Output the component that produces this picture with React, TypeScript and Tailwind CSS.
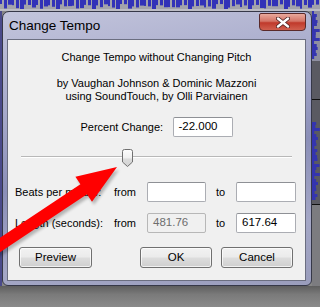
import React from 'react';

const font = { fontFamily: '"Liberation Sans", Arial, sans-serif' };

// deterministic waveform bars for the background track
const topBars = Array.from({ length: 80 }, (_, i) => {
  const v = Math.abs(Math.sin(i * 1.7) * 0.6 + Math.sin(i * 0.37) * 0.4);
  return { x: i * 4, w: 2 + (i % 3), h: 4 + v * 6 };
});
const sideBars = Array.from({ length: 70 }, (_, i) => {
  const v = Math.abs(Math.sin(i * 2.3) * 0.5 + Math.sin(i * 0.21) * 0.5);
  return { y: i * 3, w: 2 + v * 6 };
});

const TextBox: React.FC<{ value?: string; disabled?: boolean; className?: string }> = ({ value, disabled, className }) => (
  <div
    className={`h-[20px] flex items-center px-[5px] border rounded-[2px] text-[11.5px] ${
      disabled
        ? 'bg-[#f0f0f0] border-[#b7b7b7] text-[#6d6d6d]'
        : 'bg-white border-[#abadb3] border-t-[#8e9095] text-black'
    } ${className ?? ''}`}
  >
    {value}
  </div>
);

const Button: React.FC<{ label: string; className?: string }> = ({ label, className }) => (
  <button
    className={`h-[21px] rounded-[3px] border border-[#707070] bg-[linear-gradient(to_bottom,#f2f2f2_0%,#ebebeb_48%,#dddddd_52%,#cfcfcf_100%)] text-[11.5px] text-black shadow-[inset_0_0_0_1px_rgba(255,255,255,0.7)] ${className ?? ''}`}
  >
    {label}
  </button>
);

export default function App() {
  return (
    <div className="relative w-[320px] h-[307px] overflow-hidden bg-[#858585] flex flex-col" style={font}>
      {/* waveform strip above the dialog */}
      <div className="h-[11px] bg-[#a3a3ab] relative">
        <svg width="320" height="11" className="block">
          {topBars.map((b, i) => (
            <rect key={i} x={b.x} y={0} width={b.w} height={b.h} fill="#3232b8" />
          ))}
          <rect x="0" y="9" width="320" height="2" fill="#bcbcc4" />
        </svg>
      </div>

      <div className="flex h-[275px]">
        <div className="w-[2px] bg-[#4a4a8a]" />

        {/* dialog window */}
        <div className="w-[310px] flex flex-col rounded-t-[7px] rounded-b-[6px] border border-[#363848] bg-[linear-gradient(170deg,#c3c5dc_0%,#a7aacb_30%,#8b8fb8_55%,#a4a7c6_80%,#9a9dbc_100%)] pl-[4px] pr-[5px] pb-[4px]">
          <div className="h-[27px] flex items-start justify-between">
            <span className="mt-[7px] ml-[2px] text-[13.5px] leading-[14px] text-black">Change Tempo</span>
            <div className="mt-[1px] w-[47px] h-[18px] rounded-b-[4px] rounded-t-[2px] border border-[#5a2a2a] bg-[linear-gradient(to_bottom,#e9a99c_0%,#d47466_45%,#c0392b_55%,#d0604f_100%)] flex items-center justify-center">
              <svg width="14" height="11" viewBox="0 0 14 11">
                <path d="M2 1.5 L12 9.5 M12 1.5 L2 9.5" stroke="#4a2020" strokeWidth="4" strokeLinecap="round" />
                <path d="M2 1.5 L12 9.5 M12 1.5 L2 9.5" stroke="#ffffff" strokeWidth="2.4" strokeLinecap="round" />
              </svg>
            </div>
          </div>

          {/* client area */}
          <div className="flex-1 flex flex-col border border-[#6b6e80] bg-[#f0f0f0] text-[11px] text-black whitespace-nowrap">
            <div className="mt-[11px] text-center leading-[13px]">Change Tempo without Changing Pitch</div>
            <div className="mt-[13px] text-center leading-[13px]">
              <div>by Vaughan Johnson &amp; Dominic Mazzoni</div>
              <div>using SoundTouch, by Olli Parviainen</div>
            </div>

            <div className="mt-[14px] flex justify-center items-center gap-[10px]">
              <span className="w-[82px] text-right">Percent Change:</span>
              <TextBox value="-22.000" className="w-[60px]" />
            </div>

            {/* slider */}
            <div className="mt-[12px] h-[18px] px-[13px] relative">
              <div className="mt-[7px] h-[2px] bg-[#b8b8b8] border-b border-white" />
              <svg width="11" height="18" viewBox="0 0 11 18" className="absolute top-0 left-[114px]">
                <defs>
                  <linearGradient id="thumb" x1="0" y1="0" x2="0" y2="1">
                    <stop offset="0" stopColor="#fdfdfd" />
                    <stop offset="0.5" stopColor="#f0f0f0" />
                    <stop offset="0.55" stopColor="#dcdcdc" />
                    <stop offset="1" stopColor="#d2d2d2" />
                  </linearGradient>
                </defs>
                <path d="M0.5 2.5 Q0.5 0.5 2.5 0.5 H8.5 Q10.5 0.5 10.5 2.5 V13 L5.5 17.5 L0.5 13 Z" fill="url(#thumb)" stroke="#707070" />
              </svg>
            </div>

            <div className="mt-[15px] flex items-center pl-[7px]">
              <span className="w-[99px]">Beats per minute:</span>
              <span className="w-[33px]">from</span>
              <TextBox className="w-[59px]" />
              <span className="w-[20px] ml-[10px]">to</span>
              <TextBox className="w-[60px]" />
            </div>

            <div className="mt-[11px] flex items-center pl-[7px]">
              <span className="w-[99px]">Length (seconds):</span>
              <span className="w-[33px]">from</span>
              <TextBox value="481.76" disabled className="w-[59px]" />
              <span className="w-[20px] ml-[10px]">to</span>
              <TextBox value="617.64" className="w-[60px]" />
            </div>

            <div className="mt-[14px] flex pl-[11px]">
              <Button label="Preview" className="w-[73px]" />
              <Button label="OK" className="w-[72px] ml-[48px]" />
              <Button label="Cancel" className="w-[72px] ml-[9px]" />
            </div>
          </div>
        </div>

        {/* waveform to the right of the dialog */}
        <div className="w-[8px] bg-[#5a5a62] relative">
          <svg width="8" height="275" className="block">
            <rect x="0" y="0" width="8" height="50" fill="#8e8ea0" />
            {sideBars.map((b, i) =>
              i < 16 || (i > 36 && i < 63) ? (
                <rect key={i} x={0} y={b.y} width={b.w} height={3} fill="#3434b0" />
              ) : null
            )}
            <rect x="0" y="88" width="8" height="1" fill="#101010" />
            <rect x="0" y="193" width="8" height="1" fill="#101010" />
            <rect x="0" y="194" width="8" height="81" fill="#7c7c80" />
          </svg>
        </div>
      </div>

      {/* area below the dialog, darkened by its shadow */}
      <div className="flex-1 bg-[linear-gradient(to_bottom,#5e5e5e_0%,#7a7a7a_40%,#8a8a8a_100%)]" />

      {/* red annotation arrow */}
      <svg width="320" height="307" className="absolute inset-0 pointer-events-none">
        <defs>
          <filter id="blur" x="-20%" y="-20%" width="140%" height="140%">
            <feGaussianBlur stdDeviation="1.5" />
          </filter>
        </defs>
        <polygon
          points="117,167 92,201.7 87,194.2 -16.7,263.3 -23.3,253.3 80.4,184.2 75.4,176.7"
          fill="#000"
          opacity="0.25"
          transform="translate(2,3)"
          filter="url(#blur)"
        />
        <polygon points="117,167 92,201.7 87,194.2 -16.7,263.3 -23.3,253.3 80.4,184.2 75.4,176.7" fill="#ff0000" />
      </svg>
    </div>
  );
}
